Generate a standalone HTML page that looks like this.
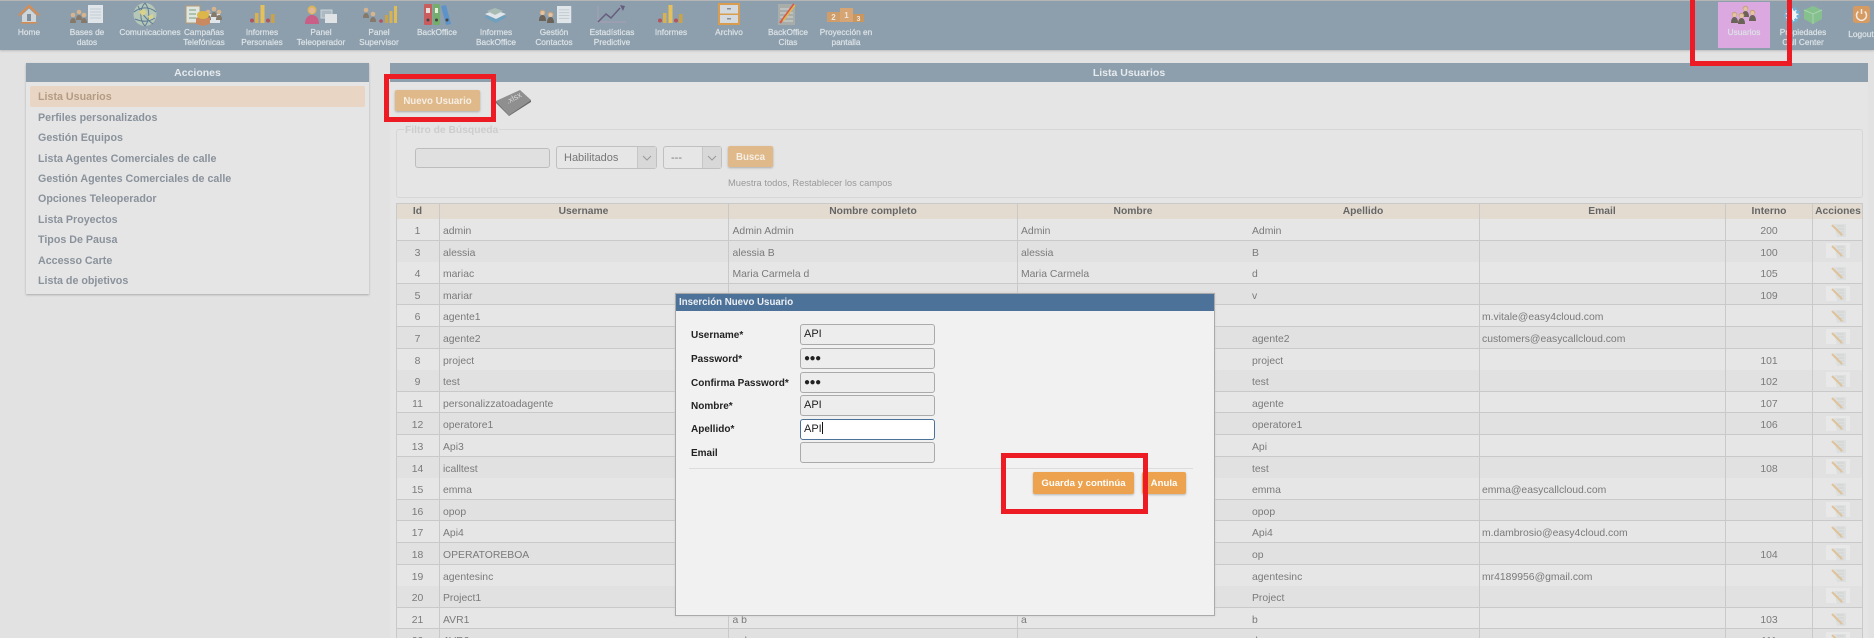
<!DOCTYPE html>
<html lang="es"><head><meta charset="utf-8"><title>Usuarios</title>
<style>
*{box-sizing:border-box}
html,body{margin:0;padding:0}
body{width:1874px;height:638px;overflow:hidden;background:#e2e2e2;font-family:"Liberation Sans",sans-serif;position:relative}
.a{position:absolute}
#bar{left:0;top:0;width:1874px;height:50px;background:#8d9fad;border-top:1px solid #b5b5b5;box-shadow:0 1px 2px #bbb}
.n{position:absolute;top:27px;width:80px;margin-left:-40px;text-align:center;font-size:8.3px;line-height:10px;color:#dde3e7;white-space:nowrap;-webkit-text-stroke:.2px #dde3e7}
.ph{background:#8d9fad;color:#e6eaed;font-weight:bold;text-align:center;font-size:10.5px;line-height:21px;height:19px}
.m{position:absolute;left:38px;font-size:10.7px;font-weight:bold;color:#8a929c;line-height:14px;white-space:nowrap}
.btn{position:absolute;border-radius:2px;text-align:center;color:#fff;font-weight:bold;box-shadow:0 1px 2px rgba(0,0,0,.25)}
.fi{position:absolute;border:1px solid #bdbdbd;border-radius:3px;background:#e0e0e0}
.sel{position:absolute;border:1px solid #c0c0c0;border-radius:3px;background:#e6e6e6;font-size:11px;color:#777;line-height:23px}
.sel i{position:absolute;right:0;top:0;bottom:0;background:#d8d8d8;border-left:1px solid #c6c6c6}
.h{position:absolute;left:0;top:0;width:1467px;height:17px;background:#e3dbd0;border-top:1px solid #c9c9c9;border-bottom:1px solid #c9c9c9;font-size:10.3px;font-weight:bold;color:#666;line-height:15px}
.h span{position:absolute;transform:translateX(-50%);white-space:nowrap}
.r{position:absolute;left:0;width:1467px;height:21.6px;line-height:21px;border-bottom:1px solid #c9c9c9;background:#e6e6e6}
.r.d{background:#e1e1e1}.r.nb{border-bottom:0}
.r span{position:absolute;top:2px;white-space:nowrap}
.c0,.c7{transform:translateX(-50%)}
.c0{left:21.5px}.c1{left:47px}.c2{left:336.5px}.c3{left:625px}.c7{left:1373px}
.v{position:absolute;top:0;bottom:0;width:1px;background:#c9c9c9}
#wrap{left:396px;top:203px;width:1467px;height:435px;overflow:hidden;font-size:10.4px;color:#7a7a7a}
#modal{left:675px;top:293px;width:540px;height:323px;background:#f1f1f1;border:1px solid #aaa;box-shadow:0 0 2px #ccc}
#mh{left:0;top:0;width:538px;height:17px;background:#4d7299;color:#ecf0f4;font-weight:bold;font-size:9.7px;line-height:18px;padding-left:3px}
.l{position:absolute;left:15px;font-size:10px;font-weight:bold;color:#222;line-height:14px;white-space:nowrap}
.f{position:absolute;left:124px;width:135px;height:21px;background:#ededed;border:1px solid #aaa;border-radius:3px;font-size:11px;color:#222;line-height:19px;padding-left:3px}
.red{position:absolute;border:5px solid #ed1c24;pointer-events:none}
svg text{font-family:"Liberation Sans",sans-serif}
</style></head><body>

<div class="a" id="bar"></div>
<div class="a" style="left:1718px;top:2px;width:52px;height:46px;background:#dca8e0"></div>

<svg class="a" style="left:0;top:0" width="1874" height="50" viewBox="0 0 1874 50">
<defs>
<g id="pp"><circle cx="3" cy="3" r="2.300" fill="#d8b48c"/><path d="M0 11c0-3 1-5 3-5s3 2 3 5z" fill="#85796a"/></g>
<g id="ppb"><circle cx="3.500" cy="3.500" r="2.800" fill="#c9a27a"/><circle cx="3.500" cy="4" r="2" fill="#e2c4a4"/><path d="M0 12c0-4 1.500-6 3.500-6s3.500 2 3.500 6z" fill="#6b6258"/></g>
<g id="ppp"><use href="#pp" x="0" y="3"/><use href="#pp" x="6" y="0"/><use href="#pp" x="11" y="3"/></g>
<g id="doc"><rect width="15" height="18" fill="#dfe5e9"/><path d="M2 4h11M2 7h11M2 10h11M2 13h11" stroke="#c3ccd2" stroke-width="1"/></g>
<g id="bars"><circle cx="2" cy="15.500" r="2" fill="#b2545c"/><rect x="5" y="8" width="3.500" height="10" fill="#d9b14f"/><rect x="10.500" y="0" width="4" height="18" fill="#e6c05a"/><circle cx="18" cy="15.500" r="2" fill="#b2545c"/><rect x="21" y="9" width="3.500" height="9" fill="#c9a34a"/></g>
</defs>
<!-- Home -->
<path d="M19 15.500L29 6l10 9.500" fill="none" stroke="#d98c50" stroke-width="2.200"/>
<path d="M22 15l7-6.500 7 6.500v8H22z" fill="#cfd6da"/><rect x="27" y="14" width="4" height="7" fill="#7f8f9c"/><rect x="21" y="22" width="16" height="1.500" fill="#d98c50"/>
<!-- Bases -->
<use href="#ppp" x="70" y="9"/><use href="#doc" x="88" y="5"/>
<!-- Globe -->
<circle cx="145" cy="14.500" r="11.500" fill="#b6c7b8"/>
<path d="M134 12c6-5 15-6 22 0M135 19c7 3 14 3 20-1M145 3c-5 5-6 17 0 23M145 3c5 6 5 17 0 23M138 6c3 7 9 14 15 18" fill="none" stroke="#5f7f98" stroke-width="1"/>
<path d="M139 11l5-2 3 4-5 3zM148 16l5-2 0 4-4 2z" fill="#d8d28a"/>
<!-- Campanas -->
<rect x="186" y="6" width="14" height="17" fill="#dfe5e0" stroke="#b79b74"/><path d="M189 10h7M189 14h7M189 18h7" stroke="#78a078"/>
<rect x="208" y="14" width="12" height="9" fill="#dfe5e9"/><use href="#ppp" x="205" y="6"/>
<path d="M196 18l7-3 7 3v6l-7 2-7-2z" fill="#c98a62"/><ellipse cx="203" cy="15" rx="6" ry="4" fill="#dcb648"/>
<!-- Informes -->
<use href="#bars" x="250" y="5"/>
<!-- Teleoperador -->
<circle cx="312" cy="10" r="4.500" fill="#d9b458"/><circle cx="312" cy="10.500" r="3" fill="#e0b898"/><path d="M305 24c0-6 3-9 7-9s7 3 7 9z" fill="#c95e86"/>
<rect x="321" y="10" width="11" height="8" fill="#aebac3" stroke="#ccd4d9"/><rect x="325" y="14" width="12" height="9" fill="#dfe3e6"/>
<!-- Supervisor -->
<use href="#pp" x="363" y="7"/><use href="#pp" x="370" y="11"/><circle cx="381" cy="21" r="1.800" fill="#b2545c"/><rect x="385" y="15" width="3" height="8" fill="#c9a34a"/><rect x="389.500" y="11" width="3" height="12" fill="#d9b14f"/><rect x="394" y="6" width="3" height="17" fill="#e0bc58"/>
<!-- BackOffice -->
<rect x="424" y="4" width="8" height="21" rx="1" fill="#c95d5d"/><rect x="433" y="4" width="7" height="21" rx="1" fill="#75ad6c"/><path d="M441 6l5-1 5 19-5 1z" fill="#5d93c9"/>
<circle cx="428" cy="20" r="1.500" fill="#444"/><circle cx="436.500" cy="20" r="1.500" fill="#444"/><circle cx="447" cy="20" r="1.500" fill="#444"/>
<rect x="426" y="8" width="4" height="5" fill="#e8dede"/><rect x="435" y="8" width="3" height="5" fill="#e8eede"/>
<!-- Informes BackOffice -->
<path d="M484 17l11-5 12 5-11 6z" fill="#6fa0bd"/><path d="M485 14l10-4 11 4-10 5z" fill="#dfe5e9"/><path d="M487 11l8-3 8 3-8 4z" fill="#a9bcb4"/>
<!-- Gestion -->
<use href="#ppb" x="539" y="9"/><use href="#ppb" x="547" y="11"/><g transform="translate(557 6) scale(.95)"><use href="#doc"/></g>
<!-- Estadisticas -->
<path d="M598 6v16h28" fill="none" stroke="#a59fb5" stroke-width="1.200"/><path d="M598 22l8-8 5 4 9-10" fill="none" stroke="#675d7e" stroke-width="1.500"/><path d="M620 5l5 1-2 5z" fill="#675d7e"/>
<!-- Informes 2 -->
<use href="#bars" x="658" y="5"/>
<!-- Archivo -->
<rect x="718" y="3" width="22" height="22" fill="#d99d52"/><rect x="720" y="5" width="18" height="8.500" fill="#d5dade"/><rect x="720" y="15" width="18" height="8" fill="#d5dade"/><rect x="727" y="8" width="4" height="1.500" fill="#8a8f94"/><rect x="727" y="18" width="4" height="1.500" fill="#8a8f94"/>
<!-- BO Citas -->
<rect x="778" y="4" width="17" height="21" fill="#a9adaa"/><path d="M780 9h13M780 13h13M780 17h13M780 21h13" stroke="#d3d6d4"/><path d="M780 23l14-19" stroke="#d9574a" stroke-width="2"/><path d="M783 21l12-16" stroke="#e0b84e" stroke-width="1.500"/>
<!-- Proyeccion -->
<rect x="827" y="12" width="13" height="10" fill="#cf9d69"/><rect x="840" y="8" width="13" height="14" fill="#d6a573"/><rect x="853" y="14" width="11" height="8" fill="#c9965f"/>
<text x="833.500" y="20" font-size="8" font-weight="bold" fill="#efe6da" text-anchor="middle">2</text><text x="846.500" y="18" font-size="8" font-weight="bold" fill="#efe6da" text-anchor="middle">1</text><text x="858.500" y="21" font-size="7" font-weight="bold" fill="#efe6da" text-anchor="middle">3</text>
<!-- Usuarios -->
<use href="#ppb" x="1731" y="11"/><use href="#ppb" x="1742" y="5"/><use href="#ppb" x="1749" y="9"/><use href="#ppb" x="1738" y="12"/>
<!-- Propiedades -->
<circle cx="1792" cy="15" r="6.500" fill="#eef3f6" stroke="#6fb2d6" stroke-width="3.500" stroke-dasharray="3 1.500"/>
<path d="M1813 6l9 4v9l-9 5-9-5v-9z" fill="#86c08f"/><path d="M1804 10l9 4 9-4M1813 14v10" stroke="#a6d4ae" fill="none"/>
<!-- Logout -->
<rect x="1853" y="6" width="17" height="17" rx="2.500" fill="#d69a63"/><path d="M1858.300 11.500a5 5 0 1 0 6.400 0" fill="none" stroke="#f3ebe2" stroke-width="1.500"/><path d="M1861.500 9v5" stroke="#f3ebe2" stroke-width="1.500"/>
</svg>

<div class="n" style="left:29px">Home</div>
<div class="n" style="left:87px">Bases de<br>datos</div>
<div class="n" style="left:150px">Comunicaciones</div>
<div class="n" style="left:204px">Campañas<br>Telefónicas</div>
<div class="n" style="left:262px">Informes<br>Personales</div>
<div class="n" style="left:321px">Panel<br>Teleoperador</div>
<div class="n" style="left:379px">Panel<br>Supervisor</div>
<div class="n" style="left:437px">BackOffice</div>
<div class="n" style="left:496px">Informes<br>BackOffice</div>
<div class="n" style="left:554px">Gestión<br>Contactos</div>
<div class="n" style="left:612px">Estadísticas<br>Predictive</div>
<div class="n" style="left:671px">Informes</div>
<div class="n" style="left:729px">Archivo</div>
<div class="n" style="left:788px">BackOffice<br>Citas</div>
<div class="n" style="left:846px">Proyección en<br>pantalla</div>
<div class="n" style="left:1744px">Usuarios</div>
<div class="n" style="left:1803px">Propiedades<br>Call Center</div>
<div class="n" style="left:1861px;top:29px">Logout</div>

<!-- left panel -->
<div class="a" style="left:26px;top:63px;width:343px;height:231px;background:#e5e5e5;box-shadow:0 1px 2px #aaa">
<div class="ph">Acciones</div>
</div>
<div class="a" style="left:30px;top:86px;width:335px;height:21px;background:#e8d5c4;border-radius:2px"></div>
<div class="m" style="top:90px;color:#b39c83">Lista Usuarios</div>
<div class="m" style="top:111px">Perfiles personalizados</div>
<div class="m" style="top:131px">Gestión Equipos</div>
<div class="m" style="top:152px">Lista Agentes Comerciales de calle</div>
<div class="m" style="top:172px">Gestión Agentes Comerciales de calle</div>
<div class="m" style="top:192px">Opciones Teleoperador</div>
<div class="m" style="top:213px">Lista Proyectos</div>
<div class="m" style="top:233px">Tipos De Pausa</div>
<div class="m" style="top:254px">Accesso Carte</div>
<div class="m" style="top:274px">Lista de objetivos</div>

<!-- right panel -->
<div class="a" style="left:390px;top:63px;width:1478px;height:575px;background:#e5e5e5">
<div class="ph">Lista Usuarios</div>
</div>
<div class="btn" style="left:395px;top:90px;width:85px;height:21px;background:#e0b98a;font-size:9.7px;line-height:23px;color:#f5eee4">Nuevo Usuario</div>
<svg class="a" style="left:495px;top:89px" width="38" height="28" viewBox="0 0 38 28">
<path d="M1 12L25 1l11 10-22 15z" fill="#8f8f8f"/><path d="M1 12l13 14v1L1 14z" fill="#707070"/><path d="M14 26l22-15v2L14 27z" fill="#6a6a6a"/>
<text x="0" y="0" font-size="8" fill="#d8d8d8" transform="translate(13 15) rotate(-28)">.xlsx</text>
</svg>

<!-- filter -->
<div class="a" style="left:396px;top:129px;width:1467px;height:69px;border:1px solid #d6d6d6;border-radius:3px"></div>
<div class="a" style="left:404px;top:124px;background:#e5e5e5;padding:0 1px;font-size:10.3px;font-weight:bold;color:#cdcdcd;line-height:13px">Filtro de Búsqueda</div>
<div class="fi" style="left:415px;top:148px;width:135px;height:20px"></div>
<div class="sel" style="left:556px;top:146px;width:101px;height:23px;padding-left:7px">Habilitados<i style="width:19px"></i>
<svg class="a" style="right:4px;top:8px" width="10" height="7"><path d="M1 1l4 4 4-4" fill="none" stroke="#999"/></svg></div>
<div class="sel" style="left:663px;top:146px;width:59px;height:23px;padding-left:7px">---<i style="width:19px"></i>
<svg class="a" style="right:4px;top:8px" width="10" height="7"><path d="M1 1l4 4 4-4" fill="none" stroke="#999"/></svg></div>
<div class="btn" style="left:728px;top:146px;width:45px;height:21px;background:#e0b98a;font-size:9.7px;line-height:23px;color:#f5eee4">Busca</div>
<div class="a" style="left:728px;top:176px;font-size:9.36px;line-height:14px;color:#999;white-space:nowrap">Muestra todos, Restablecer los campos</div>

<!-- table -->
<svg width="0" height="0" style="position:absolute"><defs>
<g id="ed"><path d="M3 1h12v13H6z" fill="#dcdfde"/><path d="M6 3h7M7 6h6M8 9h5M9 12h4" stroke="#caCfcd" stroke-width=".8"/><path d="M1 2l10 10" stroke="#e0c29a" stroke-width="2"/></g>
</defs></svg>
<div class="a" id="wrap">
<div class="h">
<span style="left:21.500px">Id</span><span style="left:187.500px">Username</span><span style="left:477px">Nombre completo</span><span style="left:737px">Nombre</span><span style="left:967px">Apellido</span><span style="left:1206px">Email</span><span style="left:1373px">Interno</span><span style="left:1442px">Acciones</span>
</div>
<div class="r" style="top:16px"><span class="c0">1</span><span class="c1">admin</span><span class="c2">Admin Admin</span><span class="c3">Admin</span><span style="left:856px">Admin</span><span class="c7">200</span></div>
<div class="r d nb" style="top:37.600px"><span class="c0">3</span><span class="c1">alessia</span><span class="c2">alessia B</span><span class="c3">alessia</span><span style="left:856px">B</span><span class="c7">100</span></div>
<div class="r" style="top:59.200px"><span class="c0">4</span><span class="c1">mariac</span><span class="c2">Maria Carmela d</span><span class="c3">Maria Carmela</span><span style="left:856px">d</span><span class="c7">105</span></div>
<div class="r d" style="top:80.800px"><span class="c0">5</span><span class="c1">mariar</span><span style="left:856px">v</span><span class="c7">109</span></div>
<div class="r" style="top:102.400px"><span class="c0">6</span><span class="c1">agente1</span><span style="left:1086px">m.vitale@easy4cloud.com</span></div>
<div class="r d" style="top:124px"><span class="c0">7</span><span class="c1">agente2</span><span style="left:856px">agente2</span><span style="left:1086px">customers@easycallcloud.com</span></div>
<div class="r nb" style="top:145.600px"><span class="c0">8</span><span class="c1">project</span><span style="left:856px">project</span><span class="c7">101</span></div>
<div class="r d" style="top:167.200px"><span class="c0">9</span><span class="c1">test</span><span style="left:856px">test</span><span class="c7">102</span></div>
<div class="r" style="top:188.800px"><span class="c0">11</span><span class="c1">personalizzatoadagente</span><span style="left:856px">agente</span><span class="c7">107</span></div>
<div class="r d" style="top:210.400px"><span class="c0">12</span><span class="c1">operatore1</span><span style="left:856px">operatore1</span><span class="c7">106</span></div>
<div class="r" style="top:232px"><span class="c0">13</span><span class="c1">Api3</span><span style="left:856px">Api</span></div>
<div class="r d nb" style="top:253.600px"><span class="c0">14</span><span class="c1">icalltest</span><span style="left:856px">test</span><span class="c7">108</span></div>
<div class="r" style="top:275.200px"><span class="c0">15</span><span class="c1">emma</span><span style="left:856px">emma</span><span style="left:1086px">emma@easycallcloud.com</span></div>
<div class="r d" style="top:296.800px"><span class="c0">16</span><span class="c1">opop</span><span style="left:856px">opop</span></div>
<div class="r" style="top:318.400px"><span class="c0">17</span><span class="c1">Api4</span><span style="left:856px">Api4</span><span style="left:1086px">m.dambrosio@easy4cloud.com</span></div>
<div class="r d" style="top:340px"><span class="c0">18</span><span class="c1">OPERATOREBOA</span><span style="left:856px">op</span><span class="c7">104</span></div>
<div class="r nb" style="top:361.600px"><span class="c0">19</span><span class="c1">agentesinc</span><span style="left:856px">agentesinc</span><span style="left:1086px">mr4189956@gmail.com</span></div>
<div class="r d" style="top:383.200px"><span class="c0">20</span><span class="c1">Project1</span><span style="left:856px">Project</span></div>
<div class="r" style="top:404.800px"><span class="c0">21</span><span class="c1">AVR1</span><span class="c2">a b</span><span class="c3">a</span><span style="left:856px">b</span><span class="c7">103</span></div>
<div class="r d" style="top:426.400px"><span class="c0">22</span><span class="c1">AVR2</span><span class="c2">a d</span><span class="c3">a</span><span style="left:856px">d</span><span class="c7">111</span></div>
<div class="v" style="left:0"></div><div class="v" style="left:43px"></div><div class="v" style="left:332px"></div><div class="v" style="left:621px"></div><div class="v" style="left:1083px"></div><div class="v" style="left:1329px"></div><div class="v" style="left:1416px"></div><div class="v" style="left:1466px"></div>
<svg class="a" style="left:1430px;top:16px" width="24" height="419">
<rect x="0" y="24" width="24" height="15" fill="#e8e8e8"/><rect x="0" y="67" width="24" height="15" fill="#e8e8e8"/><rect x="0" y="110" width="24" height="15" fill="#e8e8e8"/><rect x="0" y="153" width="24" height="15" fill="#e8e8e8"/><rect x="0" y="197" width="24" height="15" fill="#e8e8e8"/><rect x="0" y="240" width="24" height="15" fill="#e8e8e8"/><rect x="0" y="283" width="24" height="15" fill="#e8e8e8"/><rect x="0" y="326" width="24" height="15" fill="#e8e8e8"/><rect x="0" y="369" width="24" height="15" fill="#e8e8e8"/><rect x="0" y="413" width="24" height="6" fill="#e8e8e8"/>
<use href="#ed" x="5" y="4"/><use href="#ed" x="5" y="25"/><use href="#ed" x="5" y="47"/><use href="#ed" x="5" y="68"/><use href="#ed" x="5" y="90"/><use href="#ed" x="5" y="112"/><use href="#ed" x="5" y="133"/><use href="#ed" x="5" y="155"/><use href="#ed" x="5" y="177"/><use href="#ed" x="5" y="198"/><use href="#ed" x="5" y="220"/><use href="#ed" x="5" y="241"/><use href="#ed" x="5" y="263"/><use href="#ed" x="5" y="285"/><use href="#ed" x="5" y="306"/><use href="#ed" x="5" y="328"/><use href="#ed" x="5" y="349"/><use href="#ed" x="5" y="371"/><use href="#ed" x="5" y="393"/><use href="#ed" x="5" y="414"/>
</svg>
</div>

<!-- modal -->
<div class="a" id="modal">
<div class="a" id="mh">Inserción Nuevo Usuario</div>
<div class="l" style="top:35px">Username*</div><div class="f" style="top:30px">API</div>
<div class="l" style="top:59px">Password*</div><div class="f" style="top:54px;font-size:10px;letter-spacing:-.5px">●●●</div>
<div class="l" style="top:83px">Confirma Password*</div><div class="f" style="top:78px;font-size:10px;letter-spacing:-.5px">●●●</div>
<div class="l" style="top:106px">Nombre*</div><div class="f" style="top:101px">API</div>
<div class="l" style="top:129px">Apellido*</div><div class="f" style="top:125px;background:#fff;border-color:#4d7299">API<span style="display:inline-block;width:1px;height:12px;background:#111;vertical-align:-2px"></span></div>
<div class="l" style="top:153px">Email</div><div class="f" style="top:148px"></div>
<div class="a" style="left:13px;top:174px;width:504px;height:1px;background:#dcdcdc"></div>
<div class="btn" style="left:357px;top:178px;width:101px;height:22px;background:#eca24e;font-size:9.6px;line-height:24px">Guarda y continúa</div>
<div class="btn" style="left:466px;top:178px;width:44px;height:22px;background:#eca24e;font-size:9.6px;line-height:24px">Anula</div>
</div>

<div class="red" style="left:384px;top:74px;width:112px;height:48px"></div>
<div class="red" style="left:1690px;top:-8px;width:102px;height:74px"></div>
<div class="red" style="left:1001px;top:453px;width:147px;height:61px"></div>
</body></html>
